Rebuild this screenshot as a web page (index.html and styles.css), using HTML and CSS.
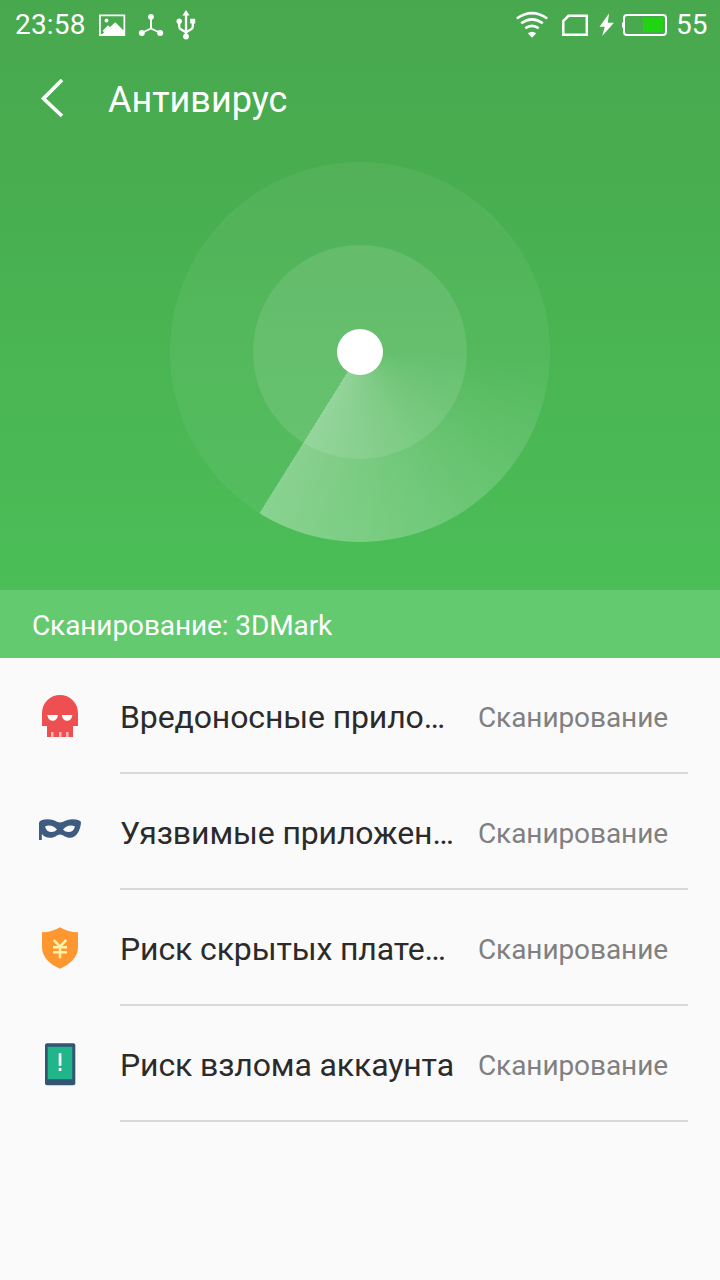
FILE: index.html
```html
<!DOCTYPE html>
<html lang="ru">
<head>
<meta charset="utf-8">
<title>Антивирус</title>
<link rel="stylesheet" href="styles.css">
</head>
<body>
<div class="screen">
  <section class="hero">
    <div class="status">
      <span class="clock">23:58</span>
      <svg class="status-icons" width="100" height="50" viewBox="0 0 100 50" fill="#fff">
        <path fill-rule="evenodd" d="M1 14.500h26.200v21.500h-26.200zM2.800 16.300v17.700h1.500l13-11.800 8.200 8.300v-14.200z"/>
        <circle cx="8.500" cy="20.500" r="1.900"/>
        <path d="M4.500 31l5.500-5.800 2.500 2.500-5 5.300z"/>
        <g stroke="#fff" stroke-width="1.900" fill="none"><path d="M53 17v11.500L43.500 33M53 28.500L62.500 33"/></g>
        <circle cx="53" cy="16.800" r="2.900"/><circle cx="43.800" cy="33" r="3"/><circle cx="62.200" cy="33" r="3"/>
        <g stroke="#fff" stroke-width="2.300" fill="none"><path d="M88 15v21M81.200 22v4.500q0 2 2 3L88 32.300l4.800-2.800q2-1 2-3V22"/></g>
        <path d="M88 10l3.600 5.600h-7.200zM92.200 18.800h5v4.800h-5z"/>
        <circle cx="81.200" cy="21.200" r="2.700"/><circle cx="88" cy="36.500" r="2.900"/>
      </svg>
      <svg class="status-signals" width="155" height="50" viewBox="0 0 155 50" fill="none" stroke="#fff">
        <g stroke-width="2.600"><path d="M1.800 18.500Q17 7.800 32.200 18.500M6.200 23.300Q17 15.300 27.800 23.300M10.300 28.300Q17 23.300 23.700 28.300"/></g>
        <path stroke="none" fill="#fff" d="M17 37.800l-4.200-4.500q4.200-3 8.400 0z"/>
        <path stroke-width="2.500" d="M53.500 15.800H71.800V34.800H48.300V21z"/>
        <path stroke="none" fill="#fff" d="M94 13.500l-9.500 13.200h5.200l-2.500 9.200 11.800-13.200h-6.200z"/>
        <rect x="109" y="15" width="42" height="20" rx="3" stroke-width="2"/>
        <path stroke="none" fill="#fff" d="M107 22.500h2v5h-2z"/>
        <path stroke="none" fill="#20d414" d="M128 18h20v14h-20z"/>
      </svg>
      <span class="level">55</span>
    </div>
    <header class="bar">
      <svg width="24" height="40" viewBox="0 0 24 40" fill="none" stroke="#fff" stroke-width="3.700"><path d="M22 1L3.500 19.500l18.500 17.500"/></svg>
      <h1 class="title">Антивирус</h1>
    </header>
    <div class="radar"><div class="ring"><div class="dot"></div></div></div>
  </section>
  <div class="progress">Сканирование: 3DMark</div>
  <ul class="checks">
    <li class="check">
      <svg class="icon" width="60" height="60" viewBox="0 0 60 60"><path fill="#ee4f50" d="M12 28a18 18 0 0 1 36 0v13h-5v11H17V41h-5z"/><path fill="#fff" d="M17.300 30h10.700q-1 5.800-5.300 5.800T17.300 30zM31.700 30h10.700q-1 5.800-5.300 5.800T31.700 30z"/><path fill="#f8b5b3" d="M21 47h2.500v5H21zM29 47h2.500v5H29zM36 47h2.500v5H36z"/></svg>
      <div class="row"><span class="name">Вредоносные прило…</span><span class="state">Сканирование</span></div>
    </li>
    <li class="check">
      <svg class="icon" width="60" height="60" viewBox="0 0 60 60"><path fill="#3e5c80" fill-rule="evenodd" d="M9 22Q9.500 18.300 18 18.300C24 18.300 27 21.500 30 21.500S37 18.300 42 18.300Q51 18.500 51 21.500C50.500 29 46.500 36.800 40 36.800C35.500 36.800 33 33.500 30 33.500S25.500 36.800 20 36.800Q14.500 36.500 11.800 33V39H9zM15 25.500Q16.500 31 21.500 31Q25 31 27 28.500Q21.500 22.500 15 25.500zM45 25.500Q38.500 22.500 33 28.500Q35 31 38.500 31Q43.500 31 45 25.500z"/></svg>
      <div class="row"><span class="name">Уязвимые приложен…</span><span class="state">Сканирование</span></div>
    </li>
    <li class="check">
      <svg class="icon" width="60" height="60" viewBox="0 0.700 60 60"><path fill="#ff9730" d="M30 11Q38 16 48 16V31C48 41.500 39 48.500 30 52.500C21 48.500 12 41.500 12 31V16Q22 16 30 11z"/><path fill="none" stroke="#fff1a5" stroke-width="2.500" d="M23.700 23.500l6.300 6.800 6.300-6.800M23 31h14M23 36h14M30 30v12"/></svg>
      <div class="row"><span class="name">Риск скрытых плате…</span><span class="state">Сканирование</span></div>
    </li>
    <li class="check">
      <svg class="icon" width="60" height="60" viewBox="0 0.700 60 60"><rect x="15" y="11" width="30.300" height="42" rx="2" fill="#325572"/><path fill="#21b58a" d="M17.700 14.500h24.600v32.500H17.700z"/><path fill="#fff" d="M28.700 21h2.700v12.500h-2.700zM28.700 35.800h2.700v2.900h-2.700z"/></svg>
      <div class="row"><span class="name">Риск взлома аккаунта</span><span class="state">Сканирование</span></div>
    </li>
  </ul>
</div>
</body>
</html>
```
FILE: styles.css
```css
* { box-sizing: border-box; }
body { margin: 0; font-family: Roboto, "Noto Sans", sans-serif; background: #fafafa; }
.screen { width: 720px; height: 1280px; overflow: hidden; background: #fafafa; }
.hero { height: 590px; background: linear-gradient(#48a84e, #48ae50 32%, #4bbe57); }
.status { display: flex; height: 50px; padding: 0 12px 0 15px; color: #fff; font-size: 28px; line-height: 50px; }
.clock { width: 83px; white-space: nowrap; letter-spacing: .2px; }
.status-icons { flex: none; }
.status-signals { flex: none; margin-left: auto; }
.level { width: 38px; padding-left: 6px; }
.bar { display: flex; align-items: center; gap: 44px; height: 98px; padding-left: 40px; color: #fff; }
.title { margin: 0; font-size: 36px; font-weight: 400; line-height: 48px; padding-top: 2px; }
.radar {
  display: grid;
  place-items: center;
  width: 380px;
  height: 380px;
  margin: 14px auto 0;
  border-radius: 50%;
  background:
    conic-gradient(from 90deg, rgba(255,255,255,0) 0deg, rgba(255,255,255,.31) 121.900deg, rgba(255,255,255,0) 122deg),
    rgba(255,255,255,.055);
}
.ring { display: grid; place-items: center; width: 214px; height: 214px; border-radius: 50%; background: rgba(255,255,255,.105); }
.dot { width: 46px; height: 46px; border-radius: 50%; background: #fff; }
.progress { height: 68px; padding-left: 32px; background: #64ca70; color: #fff; font-size: 28px; letter-spacing: -.1px; line-height: 72px; }
.checks { margin: 0; padding: 0; list-style: none; }
.check { display: flex; height: 116px; padding: 0 32px 0 30px; }
.icon { flex: none; margin: 27px 30px 0 0; }
.row { display: flex; flex: 1; justify-content: space-between; padding-right: 20px; border-bottom: 2px solid #d8d8d8; line-height: 118px; height: 116px; white-space: nowrap; }
.name { font-size: 32px; letter-spacing: -.12px; color: #2b2b2b; }
.state { font-size: 28px; letter-spacing: -.08px; line-height: 120px; color: #808080; }
```
